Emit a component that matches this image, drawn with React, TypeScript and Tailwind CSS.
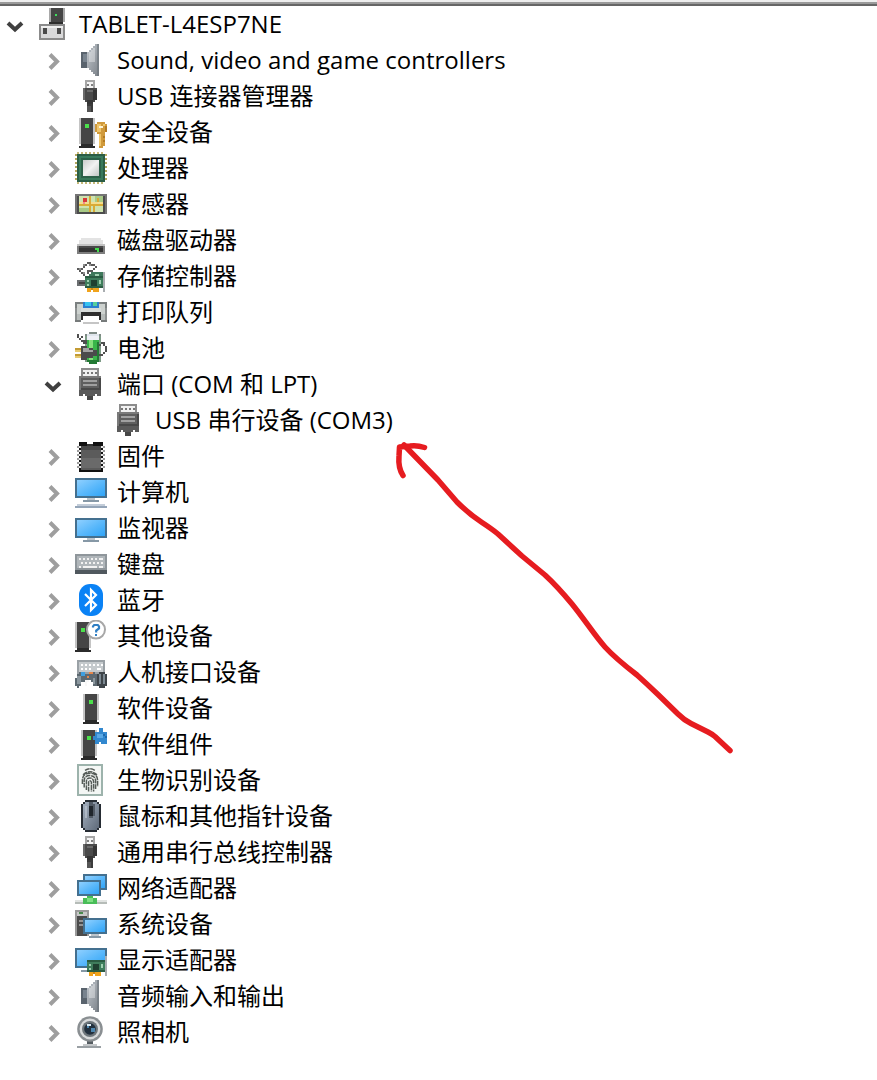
import React, { useState } from "react";

type Layer = [color: string, rects: string];

/* Pixel layers on a 16x16 grid: each rect is "x y w h", separated by commas. */
function Px({ layers }: { layers: Layer[] }) {
  return (
    <>
      {layers.map(([color, rects], i) => (
        <path
          key={i}
          fill={color}
          d={rects
            .split(",")
            .map((r) => {
              const [x, y, w, h] = r.trim().split(" ");
              return `M${x} ${y}h${w}v${h}h-${w}z`;
            })
            .join("")}
        />
      ))}
    </>
  );
}

function Monitor({ x, y, w, h }: { x: number; y: number; w: number; h: number }) {
  return (
    <>
      <rect x={x} y={y} width={w} height={h} fill="#44708f" />
      <rect x={x + 1} y={y + 1} width={w - 2} height={h - 2} fill="url(#screen)" />
    </>
  );
}

function Tower({ x, y, h = 15 }: { x: number; y: number; h?: number }) {
  return (
    <Px
      layers={[
        ["#c4c4c4", `${x} ${y} 8 ${h - 2}`],
        ["#454545", `${x + 1} ${y} 6 ${h - 2}`],
        ["#2b2b2b", `${x + 1} ${y + h - 2} 6 1,${x} ${y + h - 1} 8 1`],
        ["#4be04b", `${x + 3} ${y + 3} 2 2`],
      ]}
    />
  );
}

function Card({ x, y }: { x: number; y: number }) {
  return (
    <Px
      layers={[
        ["#3f7d5c", `${x} ${y} 9 6`],
        ["#2a5c42", `${x} ${y} 9 1,${x} ${y + 5} 9 1`],
        ["#1f4030", `${x + 3} ${y + 2} 3 3`],
        ["#9fd0b0", `${x + 1} ${y + 2} 1 1,${x + 7} ${y + 2} 1 2,${x + 1} ${y + 4} 1 1`],
        ["#f0a31c", `${x + 1} ${y + 6} 2 2,${x + 4} ${y + 6} 3 2`],
        ["#c98512", `${x + 3} ${y + 6} 1 1`],
        ["#a9adb0", `${x + 9} ${y - 2} 1 10`],
      ]}
    />
  );
}

function Speaker() {
  return (
    <>
      <path fill="#59636d" d="M3 4h3v8H3z" />
      <path fill="#78838e" d="M4 5h2v4H4z" />
      <path fill="url(#metal)" d="M6 4h1V3h1V2h1V1h1V0h2v16h-2v-1H9v-1H8v-1H7v-1H6z" />
      <path fill="#ffffff" fillOpacity=".35" d="M7 4h1V3h1V2h1v7H7z" />
      <path fill="#6d747b" fillOpacity=".6" d="M11 0h1v16h-1z" />
    </>
  );
}

function UsbPlug() {
  return (
    <Px
      layers={[
        ["#a6a6a6", "5 0 5 4"],
        ["#f4f4f4", "6 1 3 3"],
        ["#808080", "6 2 1 1,8 2 1 1"],
        ["#4a4a4a", "4 4 7 6,5 10 5 1,6 11 3 1"],
        ["#6b6b6b", "4 4 1 6,6 5 3 1"],
        ["#353535", "9 5 2 5,6 10 3 2"],
        ["#555555", "6 13 3 3"],
        ["#3b3b3b", "6 12 3 1,8 13 1 3"],
      ]}
    />
  );
}

function SerialPlug() {
  return (
    <Px
      layers={[
        ["#8c8c8c", "3 0 9 4"],
        ["#f1f1f1", "4 1 7 3"],
        ["#777777", "4 2 1 1,6 2 1 1,8 2 1 1,10 2 1 1"],
        ["#5f5f5f", "2 4 11 7"],
        ["#7a7a7a", "2 4 11 1,2 4 1 7"],
        ["#a0a0a0", "4 6 7 1,4 8 7 1"],
        ["#484848", "3 10 10 1,12 5 1 6"],
        ["#5a5a5a", "2 11 2 3,11 11 2 3,4 11 7 2,5 13 5 1"],
        ["#474747", "6 14 3 2"],
      ]}
    />
  );
}

const icons: Record<string, React.ReactNode> = {
  root: (
    <Px
      layers={[
        ["#454545", "7 0 6 7"],
        ["#a8a8a8", "6 0 1 7,13 0 1 7"],
        ["#2d2d2d", "6 7 7 1"],
        ["#3fdc5c", "9 3 1 1"],
        ["#8b8b8b", "1 8 13 8"],
        ["#d9d9da", "2 9 11 6"],
        ["#f0f0f0", "2 9 11 1"],
        ["#4a4a4a", "3 10 2 3,10 10 2 3"],
      ]}
    />
  ),
  speaker: <Speaker />,
  usb: <UsbPlug />,
  security: (
    <>
      <Tower x={2} y={1} h={15} />
      <Px
        layers={[
          ["#d09a3c", "11 3 4 1,10 4 6 4,11 8 4 1,12 9 3 6,12 15 2 1"],
          ["#f0c66c", "11 4 2 4,12 9 1 6,14 4 1 1"],
          ["#b27a22", "14 10 1 1,14 12 1 1,15 5 1 3"],
          ["#fff4d6", "12 5 2 1"],
        ]}
      />
    </>
  ),
  cpu: (
    <>
      <Px
        layers={[
          ["#c4b878", "1 0 1 1,3 0 1 1,5 0 1 1,7 0 1 1,9 0 1 1,11 0 1 1,13 0 1 1,1 15 1 1,3 15 1 1,5 15 1 1,7 15 1 1,9 15 1 1,11 15 1 1,13 15 1 1"],
          ["#b5a861", "0 1 1 1,0 3 1 1,0 5 1 1,0 7 1 1,0 9 1 1,0 11 1 1,0 13 1 1,15 1 1 1,15 3 1 1,15 5 1 1,15 7 1 1,15 9 1 1,15 11 1 1,15 13 1 1"],
          ["#2b5d45", "1 1 14 14"],
          ["#397a5b", "2 2 12 12"],
          ["#2d6149", "3 3 10 10"],
        ]}
      />
      <rect x="4" y="4" width="8" height="8" fill="url(#chip)" />
    </>
  ),
  sensor: (
    <Px
      layers={[
        ["#4c4c4c", "0 3 16 10"],
        ["#757575", "0 3 1 10,15 3 1 10,1 3 14 1"],
        ["#cfe3ae", "2 4 12 8"],
        ["#a8ca86", "2 10 5 2,10 4 4 3"],
        ["#d9ab35", "2 8 12 1,7 4 1 8,11 5 1 4,9 8 1 4"],
        ["#f3dd8d", "2 7 5 1,8 7 6 1"],
        ["#d93a3a", "4 5 2 2"],
        ["#f18c8c", "4 7 1 1"],
      ]}
    />
  ),
  disk: (
    <>
      <path fill="#e3e3e3" d="M3 7h10v1h1v2h1v1H1v-1h1V8h1z" />
      <path fill="#c2c2c2" d="M1 10h14v1H1z" />
      <Px
        layers={[
          ["#4a4a4a", "1 11 14 4"],
          ["#7e7e7e", "1 11 1 4,14 11 1 4,2 14 12 1"],
          ["#353535", "2 12 12 2"],
          ["#43dd4c", "11 12 1 2,10 12 1 1"],
        ]}
      />
    </>
  ),
  storage: (
    <>
      <Px
        layers={[
          ["#5a5a5a", "6 1 2 1,5 2 1 1,8 2 2 1,4 3 1 1,10 3 1 1,3 4 1 1,1 4 2 1,2 5 1 1,9 4 1 1,3 6 1 1,6 5 3 1,6 6 1 1,4 7 1 1,5 8 2 1"],
          ["#8e8e8e", "7 2 1 1,4 2 1 1,2 4 1 1,4 6 1 1"],
          ["#6a6e70", "1 10 4 3"],
          ["#444444", "2 11 3 1"],
          ["#3e785b", "8 6 6 2,7 7 1 1"],
          ["#9fd0b0", "10 7 2 1"],
        ]}
      />
      <Card x={5} y={8} />
    </>
  ),
  printer: (
    <Px
      layers={[
        ["#7b8080", "0 3 4 3,12 3 4 3"],
        ["#8d9191", "0 6 16 6"],
        ["#cdd2cf", "1 4 3 3,12 4 3 3,1 7 14 3"],
        ["#d8dcda", "3 6 10 2"],
        ["#2b7fd0", "4 3 8 3"],
        ["#35c3f0", "5 3 3 2"],
        ["#58cf9a", "9 3 2 2"],
        ["#b7bcba", "1 9 2 3,13 9 2 3"],
        ["#767a7a", "0 12 3 1,13 12 3 1"],
        ["#2e2e2e", "3 8 10 2,3 10 1 2,12 10 1 2"],
        ["#c5c5c5", "4 13 8 1"],
        ["#ffffff", "4 10 8 3"],
      ]}
    />
  ),
  battery: (
    <>
      <Px
        layers={[
          ["#7f8a85", "7 0 4 1,5 1 8 1"],
          ["#dfe5ec", "6 1 6 2"],
          ["#7d9b86", "5 2 1 13,12 2 1 13"],
          ["#eef0f6", "6 2 6 2"],
          ["#39b54a", "6 4 6 11"],
          ["#86e07d", "7 4 2 11"],
          ["#237a34", "6 14 6 1,7 15 4 1,11 5 1 9"],
          ["#4f4f4f", "1 1 1 2,2 3 1 1,3 2 1 1,3 4 3 1,4 5 2 1,13 5 2 1,14 6 1 1,15 7 1 3,14 10 1 1,12 11 2 1,12 6 1 1"],
          ["#c39b34", "0 8 3 1,0 11 3 1"],
          ["#e6ca71", "0 9 3 1,0 12 3 1"],
          ["#4b4b4b", "3 7 3 7,6 8 3 5,9 9 2 3"],
          ["#a3a3a3", "4 8 3 2,7 9 2 1"],
        ]}
      />
    </>
  ),
  serial: <SerialPlug />,
  firmware: (
    <>
      <Px
        layers={[
          ["#111111", "2 1 4 1,9 1 5 1,2 2 12 14"],
          ["#ffffff", "6 1 3 1"],
          ["#333333", "6 2 3 1"],
          ["#9b9b9b", "1 3 2 1,1 5 2 1,1 7 2 1,1 9 2 1,1 11 2 1,1 13 2 1,13 3 2 1,13 5 2 1,13 7 2 1,13 9 2 1,13 11 2 1,13 13 2 1"],
          ["#e8e8e8", "2 3 1 1,2 5 1 1,2 7 1 1,2 9 1 1,2 11 1 1,2 13 1 1,13 3 1 1,13 5 1 1,13 7 1 1,13 9 1 1,13 11 1 1,13 13 1 1"],
          ["#5b5b5b", "3 3 10 12"],
          ["#6a6a6a", "3 9 10 5"],
          ["#484848", "3 3 10 2"],
        ]}
      />
    </>
  ),
  computer: (
    <>
      <Monitor x={0} y={1} w={16} h={10} />
      <Px layers={[["#bcc4cb", "6 11 4 1"], ["#8698a6", "4 12 8 1"], ["#c3cdd9", "1 14 14 1"], ["#94a5b8", "0 15 16 1"]]} />
    </>
  ),
  monitor: (
    <>
      <Monitor x={0} y={3} w={16} h={10} />
      <Px layers={[["#bcc4cb", "6 13 4 1"], ["#8698a6", "4 14 8 1"]]} />
    </>
  ),
  keyboard: (
    <Px
      layers={[
        ["#8f969b", "0 3 16 8"],
        ["#b0b6ba", "1 4 14 6"],
        ["#f2f2f2", "2 5 1 1,4 5 1 1,6 5 1 1,8 5 1 1,10 5 1 1,12 5 2 1,3 7 1 1,5 7 1 1,7 7 1 1,9 7 1 1,11 7 1 1,13 7 1 1,2 9 1 1,4 9 7 1,12 9 2 1"],
        ["#50585e", "0 11 16 2"],
      ]}
    />
  ),
  bluetooth: (
    <>
      <rect x="2" y="0" width="12" height="16" rx="5.5" fill="#0a82f5" />
      <path d="M5 5l5.5 5.5L8 13V3l2.5 2.5L5 11" fill="none" stroke="#fff" strokeWidth="1.1" />
    </>
  ),
  unknown: (
    <>
      <Tower x={0} y={1} h={15} />
      <circle cx="10.5" cy="4.8" r="4.5" fill="#fff" stroke="#a7a7a7" strokeWidth="1" />
      <path d="M9 3.8V3.2L9.6 2.5h1.8l.6.7v1L10.6 5.3v1" fill="none" stroke="#2f7fc4" strokeWidth="1.1" />
      <path fill="#2f7fc4" d="M10 7h1v1h-1z" />
    </>
  ),
  hid: (
    <Px
      layers={[
        ["#9aa1a6", "1 2 14 7"],
        ["#c5cacd", "2 3 12 5"],
        ["#ffffff", "3 4 1 1,5 4 1 1,7 4 1 1,9 4 1 1,11 4 1 1,13 4 1 1,3 6 1 1,5 6 1 1,7 6 1 1,11 6 2 1"],
        ["#5d6971", "1 9 10 3,0 11 3 4,9 11 2 4,2 8 3 1,8 8 2 1,3 12 2 1,8 12 1 1,1 15 1 1"],
        ["#8c989f", "1 10 2 4,9 11 1 3"],
        ["#3f9fe0", "3 8 2 2"],
        ["#e6864a", "7 8 2 1,6 10 1 1"],
        ["#f7f7f7", "5 12 1 3,6 12 1 1"],
        ["#3e4449", "12 8 3 1,11 9 5 6,12 15 3 1"],
        ["#7c8992", "12 9 1 5,14 9 1 5"],
      ]}
    />
  ),
  tower: <Tower x={4} y={1} h={15} />,
  component: (
    <>
      <Tower x={3} y={1} h={15} />
      <Px
        layers={[
          ["#3288cf", "10 2 6 5,12 0 2 2,10 7 2 1,13 7 3 1,9 4 1 2"],
          ["#5aa9e6", "11 3 3 2"],
          ["#1d69ad", "14 3 1 1,15 4 1 1"],
        ]}
      />
    </>
  ),
  fingerprint: (
    <>
      <path fill="#9db3ac" d="M1 0h13v16H1z" />
      <path fill="#f4f7f5" d="M2 1h11v14H2z" />
      <g fill="none" stroke="#555c58" strokeWidth=".75" strokeDasharray="2.4 .35">
        <path d="M5 3.2Q7.5 1.6 10 3.2M4 5.4Q7.5 2.3 11 5.4M3.7 10V7.8Q4 4.6 7.5 4.6T11.3 8v3.4M4.6 11.8V8Q4.9 5.8 7.5 5.8t2.8 2.5v4.4M5.7 13V8.4Q6 7 7.5 7t1.8 1.7v5M6.8 13.8V9q.7-1.3 1.4 0v4.7" />
      </g>
    </>
  ),
  mouse: (
    <>
      <path fill="#262c33" d="M5 0h6v1h1v1h1v12h-1v1h-1v1H5v-1H4v-1H3V2h1V1h1z" />
      <path fill="url(#mouse)" d="M5 1h6v1h1v12h-1v1H5v-1H4V2h1z" />
      <path fill="#525b66" d="M7 1h2v1h1v6H9v1H7V8H7z" />
      <path fill="#20262c" d="M7 3h2v5H7z" />
      <path fill="#c3ccd7" fillOpacity=".6" d="M5 3h1v6H5z" />
    </>
  ),
  network: (
    <>
      <Monitor x={4} y={1} w={12} h={8} />
      <Monitor x={1} y={4} w={12} h={8} />
      <Px
        layers={[
          ["#b6bcb8", "0 14 16 2"],
          ["#e1e4e2", "0 14 16 1"],
          ["#49bd58", "6 12 3 1,4 13 7 3"],
          ["#7ee082", "6 13 3 2"],
        ]}
      />
    </>
  ),
  system: (
    <>
      <Px
        layers={[
          ["#9a9a9a", "0 1 7 13"],
          ["#4b4b4b", "1 4 5 10"],
          ["#c8c8c8", "1 2 5 2"],
          ["#4a8a4e", "2 2 2 1"],
          ["#969696", "2 6 3 1,2 8 3 1"],
        ]}
      />
      <Monitor x={4} y={5} w={12} h={8} />
      <Px layers={[["#bcc4cb", "8 13 4 1"], ["#8698a6", "7 14 6 1"]]} />
    </>
  ),
  display: (
    <>
      <Monitor x={0} y={2} w={16} h={10} />
      <Px layers={[["#8698a6", "3 13 3 1"]]} />
      <Card x={6} y={8} />
    </>
  ),
  camera: (
    <>
      <Px layers={[["#555c61", "6 12 3 3"], ["#9aa0a4", "1 15 12 1"], ["#c3c6c8", "4 14 7 1"]]} />
      <circle cx="7.5" cy="6.5" r="6.4" fill="#8a8f92" />
      <circle cx="7.5" cy="6.5" r="5.2" fill="#d8dadb" />
      <circle cx="7.5" cy="6.5" r="4" fill="#6e767b" />
      <circle cx="7.5" cy="6.5" r="2.9" fill="#22303d" />
      <path fill="#4d86ae" d="M8 6h2v2H8zM6 5h1v1H6z" />
      <path fill="#dcecf5" d="M6 4h2v1H6z" />
    </>
  ),
};

function Icon({ name }: { name: string }) {
  return (
    <svg aria-hidden="true" viewBox="0 0 16 16" className="size-8 shrink-0">
      {icons[name]}
    </svg>
  );
}

type Node = { icon: string; label: string; children?: Node[]; leaf?: boolean; open?: boolean };

const devices: Node = {
  icon: "root",
  label: "TABLET-L4ESP7NE",
  open: true,
  children: [
    { icon: "speaker", label: "Sound, video and game controllers" },
    { icon: "usb", label: "USB 连接器管理器" },
    { icon: "security", label: "安全设备" },
    { icon: "cpu", label: "处理器" },
    { icon: "sensor", label: "传感器" },
    { icon: "disk", label: "磁盘驱动器" },
    { icon: "storage", label: "存储控制器" },
    { icon: "printer", label: "打印队列" },
    { icon: "battery", label: "电池" },
    {
      icon: "serial",
      label: "端口 (COM 和 LPT)",
      open: true,
      children: [{ icon: "serial", label: "USB 串行设备 (COM3)", leaf: true }],
    },
    { icon: "firmware", label: "固件" },
    { icon: "computer", label: "计算机" },
    { icon: "monitor", label: "监视器" },
    { icon: "keyboard", label: "键盘" },
    { icon: "bluetooth", label: "蓝牙" },
    { icon: "unknown", label: "其他设备" },
    { icon: "hid", label: "人机接口设备" },
    { icon: "tower", label: "软件设备" },
    { icon: "component", label: "软件组件" },
    { icon: "fingerprint", label: "生物识别设备" },
    { icon: "mouse", label: "鼠标和其他指针设备" },
    { icon: "usb", label: "通用串行总线控制器" },
    { icon: "network", label: "网络适配器" },
    { icon: "system", label: "系统设备" },
    { icon: "display", label: "显示适配器" },
    { icon: "speaker", label: "音频输入和输出" },
    { icon: "camera", label: "照相机" },
  ],
};

function TreeItem({ node }: { node: Node }) {
  const [open, setOpen] = useState(node.open ?? false);
  return (
    <li role="treeitem" aria-expanded={node.leaf ? undefined : open}>
      <div className="flex h-9 items-center">
        {node.leaf ? (
          <span className="w-8 shrink-0" />
        ) : (
          <button
            type="button"
            aria-label={node.label}
            onClick={() => setOpen(!open)}
            className="h-9 w-8 shrink-0"
          >
            <svg aria-hidden="true" viewBox="0 0 32 36" className="h-9 w-8" fill="none" strokeWidth="4">
              {open ? (
                <path d="M3 17l7 6.500 7-6.500" stroke="#404040" />
              ) : (
                <path d="M7 12.500l7 7-7 7" stroke="#9e9e9e" />
              )}
            </svg>
          </button>
        )}
        <Icon name={node.icon} />
        <span className="ml-2.5 whitespace-nowrap text-2xl leading-9">{node.label}</span>
      </div>
      {open && node.children && (
        <ul role="group" className="pl-[38px]">
          {node.children.map((child) => (
            <TreeItem key={child.label} node={child} />
          ))}
        </ul>
      )}
    </li>
  );
}

export default function App() {
  return (
    <main className="relative min-h-screen overflow-hidden bg-white font-['Open_Sans','Noto_Sans_CJK_SC',sans-serif] text-black">
      <svg aria-hidden="true" className="absolute size-0">
        <defs>
          <linearGradient id="screen" x1="0" y1="0" x2="1" y2="1">
            <stop offset="0" stopColor="#8fd0ff" />
            <stop offset=".5" stopColor="#5cb9fb" />
            <stop offset="1" stopColor="#2fa4f7" />
          </linearGradient>
          <linearGradient id="metal" x1="0" y1="0" x2="1" y2="1">
            <stop offset="0" stopColor="#c2c8ce" />
            <stop offset="1" stopColor="#7b8188" />
          </linearGradient>
          <linearGradient id="chip" x1="0" y1="0" x2="1" y2="1">
            <stop offset="0" stopColor="#c9cccb" />
            <stop offset=".5" stopColor="#f2f2f2" />
            <stop offset="1" stopColor="#c2c6c4" />
          </linearGradient>
          <linearGradient id="mouse" x1="0" y1="0" x2="1" y2="1">
            <stop offset="0" stopColor="#a4b0bf" />
            <stop offset="1" stopColor="#5d6978" />
          </linearGradient>
        </defs>
      </svg>
      <div className="h-1.5 border-b-2 border-[#666666] bg-[#eeeeee]">
        <div className="h-1 border-b-2 border-[#9a9a9a]" />
      </div>
      <ul role="tree" className="pl-[5px]">
        <TreeItem node={devices} />
      </ul>
      <svg
        aria-hidden="true"
        viewBox="0 0 350 320"
        className="pointer-events-none absolute left-[390px] top-[436px] h-[320px] w-[350px]"
        fill="none"
        stroke="#e61c20"
        strokeWidth="5.5"
        strokeLinecap="round"
        strokeLinejoin="round"
      >
        <path d="M340 314.500L325 300.500Q322 298 318 296L301 287.500Q294 284 288 278L268 258.500Q257 248 247 239Q225 222 215 211C205 200 195 184 182 168Q167 150 155 139L132 120L108 98Q102 93 92 86.500Q79 78 67 66L48 44L14 9" />
        <path d="M13 39.500Q8 32 9 20L9.500 11L20 10Q27 9 34.500 11.500" />
      </svg>
    </main>
  );
}
